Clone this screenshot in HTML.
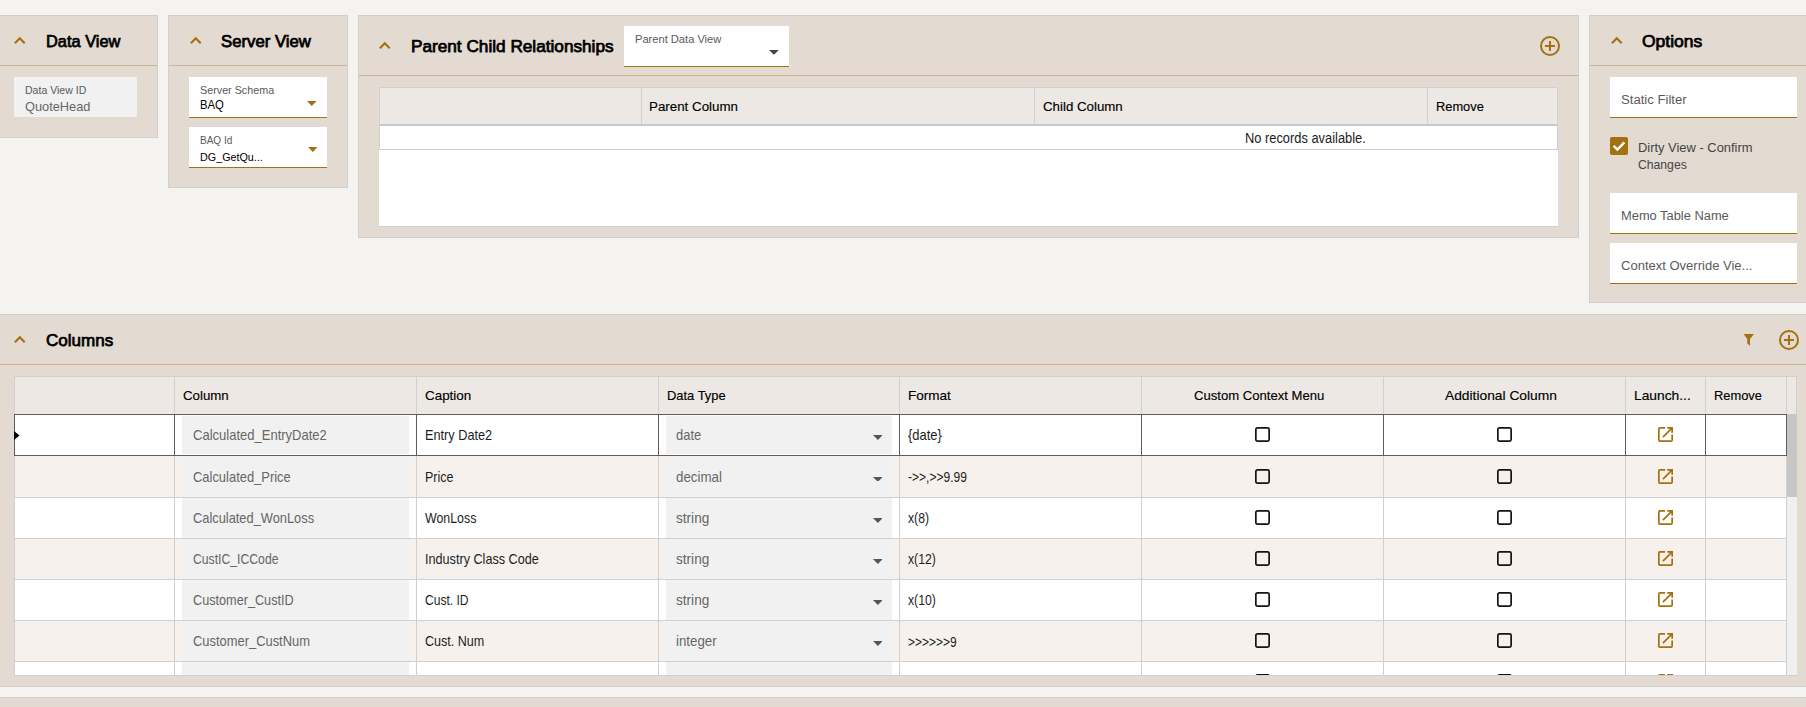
<!DOCTYPE html>
<html><head><meta charset="utf-8"><style>
html,body{margin:0;padding:0;}
body{width:1806px;height:707px;overflow:hidden;background:#f4f3ef;position:relative;font-family:"Liberation Sans",sans-serif;}
.a{position:absolute;}
.t{position:absolute;white-space:nowrap;transform-origin:0 0;}
svg{display:block;}
</style></head><body>
<div class="a" style="left:-1px;top:15px;width:159px;height:123px;background:#e3dad1;box-sizing:border-box;border:1px solid #cfcfcf;"></div>
<div class="a" style="left:0px;top:65px;width:157px;height:1px;background:#cfb397;"></div>
<svg class="a" style="left:11.8px;top:35.1px" width="16" height="12" viewBox="0 0 16 12"><polyline points="2.9,8.2 7.8,3.3 12.7,8.2" fill="none" stroke="#a5700f" stroke-width="2.2"/></svg>
<div class="t" style="left:46.20px;top:32.88px;font-size:17.15px;line-height:17.15px;font-weight:normal;color:#000;-webkit-text-stroke:0.75px #000;transform:scaleX(0.9555)">Data View</div>
<div class="a" style="left:14px;top:77px;width:123px;height:40px;background:#f1f1f1;"></div>
<div class="t" style="left:24.60px;top:85.07px;font-size:10.90px;line-height:10.90px;font-weight:normal;color:#5a5a5a;transform:scaleX(0.9666)">Data View ID</div>
<div class="t" style="left:24.60px;top:101.35px;font-size:12.94px;line-height:12.94px;font-weight:normal;color:#666;transform:scaleX(0.9884)">QuoteHead</div>
<div class="a" style="left:168px;top:15px;width:180px;height:173px;background:#e3dad1;box-sizing:border-box;border:1px solid #cfcfcf;"></div>
<div class="a" style="left:169px;top:65px;width:178px;height:1px;background:#cfb397;"></div>
<svg class="a" style="left:187.6px;top:35.4px" width="16" height="12" viewBox="0 0 16 12"><polyline points="2.9,8.2 7.8,3.3 12.7,8.2" fill="none" stroke="#a5700f" stroke-width="2.2"/></svg>
<div class="t" style="left:221.00px;top:33.75px;font-size:16.72px;line-height:16.72px;font-weight:normal;color:#000;-webkit-text-stroke:0.75px #000;transform:scaleX(1.0021)">Server View</div>
<div class="a" style="left:189px;top:77px;width:138px;height:41px;background:#fff;"></div>
<div class="a" style="left:189px;top:117px;width:138px;height:1px;background:#a5700f;"></div>
<div class="t" style="left:199.90px;top:84.93px;font-size:11.19px;line-height:11.19px;font-weight:normal;color:#5a5a5a;transform:scaleX(0.9620)">Server Schema</div>
<div class="t" style="left:199.90px;top:98.65px;font-size:12.94px;line-height:12.94px;font-weight:normal;color:#000;transform:scaleX(0.8748)">BAQ</div>
<svg class="a" style="left:307.4px;top:101px" width="9.6" height="5" viewBox="0 0 9.6 5"><polygon points="0,0 9.6,0 4.8,5" fill="#a5700f"/></svg>
<div class="a" style="left:189px;top:127px;width:138px;height:41px;background:#fff;"></div>
<div class="a" style="left:189px;top:167px;width:138px;height:1px;background:#a5700f;"></div>
<div class="t" style="left:199.80px;top:133.56px;font-size:11.63px;line-height:11.63px;font-weight:normal;color:#5a5a5a;transform:scaleX(0.8617)">BAQ Id</div>
<div class="t" style="left:199.80px;top:152.05px;font-size:11.05px;line-height:11.05px;font-weight:normal;color:#000;transform:scaleX(0.9742)">DG_GetQu...</div>
<svg class="a" style="left:307.5px;top:147px" width="9.6" height="5" viewBox="0 0 9.6 5"><polygon points="0,0 9.6,0 4.8,5" fill="#a5700f"/></svg>
<div class="a" style="left:358px;top:15px;width:1221px;height:223px;background:#e3dad1;box-sizing:border-box;border:1px solid #cfcfcf;"></div>
<div class="a" style="left:359px;top:75px;width:1219px;height:1px;background:#cfb397;"></div>
<svg class="a" style="left:377.2px;top:40.1px" width="16" height="12" viewBox="0 0 16 12"><polyline points="2.9,8.2 7.8,3.3 12.7,8.2" fill="none" stroke="#a5700f" stroke-width="2.2"/></svg>
<div class="t" style="left:411.00px;top:38.83px;font-size:16.86px;line-height:16.86px;font-weight:normal;color:#000;-webkit-text-stroke:0.75px #000;transform:scaleX(1.0197)">Parent Child Relationships</div>
<div class="a" style="left:624px;top:26px;width:165px;height:41px;background:#fff;"></div>
<div class="a" style="left:624px;top:66px;width:165px;height:1px;background:#a5700f;"></div>
<div class="t" style="left:634.80px;top:33.78px;font-size:11.48px;line-height:11.48px;font-weight:normal;color:#5a5a5a;transform:scaleX(0.9692)">Parent Data View</div>
<svg class="a" style="left:769.2px;top:50.2px" width="9.8" height="4.8" viewBox="0 0 9.8 4.8"><polygon points="0,0 9.8,0 4.9,4.8" fill="#444"/></svg>
<svg class="a" style="left:1538.9px;top:35.3px" width="22" height="22" viewBox="0 0 22 22"><circle cx="11" cy="11" r="9" fill="none" stroke="#a5700f" stroke-width="2"/><path d="M6 11h10M11 6v10" stroke="#a5700f" stroke-width="2"/></svg>
<div class="a" style="left:379px;top:87px;width:1179px;height:139px;background:#fff;"></div>
<div class="a" style="left:379px;top:226px;width:1179px;height:1px;background:#d0d0d0;"></div>
<div class="a" style="left:379px;top:87px;width:1px;height:63px;background:#d0d0d0;"></div>
<div class="a" style="left:1557px;top:87px;width:1px;height:63px;background:#d0d0d0;"></div>
<div class="a" style="left:379px;top:87px;width:1179px;height:1px;background:#d0d0d0;"></div>
<div class="a" style="left:380px;top:88px;width:1177px;height:36px;background:#ede8e3;"></div>
<div class="a" style="left:380px;top:124px;width:1177px;height:2px;background:#c8c8c8;"></div>
<div class="a" style="left:641px;top:88px;width:1px;height:36px;background:#d0d0d0;"></div>
<div class="a" style="left:1034px;top:88px;width:1px;height:36px;background:#d0d0d0;"></div>
<div class="a" style="left:1427px;top:88px;width:1px;height:36px;background:#d0d0d0;"></div>
<div class="a" style="left:380px;top:149px;width:1177px;height:1px;background:#d0d0d0;"></div>
<div class="t" style="left:649.00px;top:100.03px;font-size:13.66px;line-height:13.66px;font-weight:normal;color:#000;-webkit-text-stroke:0.15px #000;transform:scaleX(0.9766)">Parent Column</div>
<div class="t" style="left:1042.50px;top:100.03px;font-size:13.66px;line-height:13.66px;font-weight:normal;color:#000;-webkit-text-stroke:0.15px #000;transform:scaleX(0.9730)">Child Column</div>
<div class="t" style="left:1435.80px;top:100.03px;font-size:13.66px;line-height:13.66px;font-weight:normal;color:#000;-webkit-text-stroke:0.15px #000;transform:scaleX(0.9395)">Remove</div>
<div class="t" style="left:1245.30px;top:131.99px;font-size:13.95px;line-height:13.95px;font-weight:normal;color:#222;transform:scaleX(0.9224)">No records available.</div>
<div class="a" style="left:1589px;top:15px;width:220px;height:288px;background:#e3dad1;box-sizing:border-box;border:1px solid #cfcfcf;"></div>
<div class="a" style="left:1590px;top:65px;width:218px;height:1px;background:#cfb397;"></div>
<svg class="a" style="left:1608.5px;top:35.3px" width="16" height="12" viewBox="0 0 16 12"><polyline points="2.9,8.2 7.8,3.3 12.7,8.2" fill="none" stroke="#a5700f" stroke-width="2.2"/></svg>
<div class="t" style="left:1642.00px;top:33.10px;font-size:17.01px;line-height:17.01px;font-weight:normal;color:#000;-webkit-text-stroke:0.75px #000;transform:scaleX(1.0289)">Options</div>
<div class="a" style="left:1610px;top:77px;width:187px;height:41px;background:#fff;"></div>
<div class="a" style="left:1610px;top:117px;width:187px;height:1px;background:#a5700f;"></div>
<div class="t" style="left:1620.60px;top:93.03px;font-size:13.66px;line-height:13.66px;font-weight:normal;color:#5a5a5a;transform:scaleX(0.9615)">Static Filter</div>
<div class="a" style="left:1610px;top:137px;width:18px;height:18px;background:#a5700f;border-radius:2px;"></div>
<svg class="a" style="left:1610px;top:137px" width="18" height="18" viewBox="0 0 18 18"><polyline points="3.6,8.8 7.4,12.5 14.4,5.3" fill="none" stroke="#fff" stroke-width="2.4"/></svg>
<div class="t" style="left:1638.20px;top:141.18px;font-size:13.37px;line-height:13.37px;font-weight:normal;color:#444;transform:scaleX(0.9660)">Dirty View - Confirm</div>
<div class="t" style="left:1638.20px;top:159.44px;font-size:12.35px;line-height:12.35px;font-weight:normal;color:#444;transform:scaleX(0.9867)">Changes</div>
<div class="a" style="left:1610px;top:193px;width:187px;height:41px;background:#fff;"></div>
<div class="a" style="left:1610px;top:233px;width:187px;height:1px;background:#a5700f;"></div>
<div class="t" style="left:1621.00px;top:209.16px;font-size:13.52px;line-height:13.52px;font-weight:normal;color:#5a5a5a;transform:scaleX(0.9523)">Memo Table Name</div>
<div class="a" style="left:1610px;top:243px;width:187px;height:41px;background:#fff;"></div>
<div class="a" style="left:1610px;top:283px;width:187px;height:1px;background:#a5700f;"></div>
<div class="t" style="left:1621.00px;top:259.33px;font-size:13.66px;line-height:13.66px;font-weight:normal;color:#5a5a5a;transform:scaleX(0.9532)">Context Override Vie...</div>
<div class="a" style="left:-1px;top:314px;width:1808px;height:373px;background:#e3dad1;box-sizing:border-box;border:1px solid #cfcfcf;"></div>
<div class="a" style="left:0px;top:364px;width:1806px;height:1px;background:#cfb397;"></div>
<svg class="a" style="left:11.9px;top:334.4px" width="16" height="12" viewBox="0 0 16 12"><polyline points="2.9,8.2 7.8,3.3 12.7,8.2" fill="none" stroke="#a5700f" stroke-width="2.2"/></svg>
<div class="t" style="left:45.70px;top:331.76px;font-size:17.30px;line-height:17.30px;font-weight:normal;color:#000;-webkit-text-stroke:0.75px #000;transform:scaleX(0.9861)">Columns</div>
<svg class="a" style="left:1743px;top:333px" width="12" height="13" viewBox="0 0 12 13"><polygon points="0.5,1 11,1 7,6 7,12.8 4.3,10.5 4.3,6" fill="#a5700f"/></svg>
<svg class="a" style="left:1777.8px;top:328.9px" width="22" height="22" viewBox="0 0 22 22"><circle cx="11" cy="11" r="9" fill="none" stroke="#a5700f" stroke-width="2"/><path d="M6 11h10M11 6v10" stroke="#a5700f" stroke-width="2"/></svg>
<div class="a" style="left:14px;top:376px;width:1783px;height:300px;background:#fff;box-sizing:border-box;border:1px solid #d0d0d0;"></div>
<div class="a" style="left:15px;top:377px;width:1781px;height:37px;background:#ede8e3;"></div>
<div class="a" style="left:174px;top:377px;width:1px;height:37px;background:#d0d0d0;"></div>
<div class="a" style="left:416px;top:377px;width:1px;height:37px;background:#d0d0d0;"></div>
<div class="a" style="left:658px;top:377px;width:1px;height:37px;background:#d0d0d0;"></div>
<div class="a" style="left:899px;top:377px;width:1px;height:37px;background:#d0d0d0;"></div>
<div class="a" style="left:1141px;top:377px;width:1px;height:37px;background:#d0d0d0;"></div>
<div class="a" style="left:1383px;top:377px;width:1px;height:37px;background:#d0d0d0;"></div>
<div class="a" style="left:1625px;top:377px;width:1px;height:37px;background:#d0d0d0;"></div>
<div class="a" style="left:1705px;top:377px;width:1px;height:37px;background:#d0d0d0;"></div>
<div class="a" style="left:1786px;top:377px;width:1px;height:37px;background:#d0d0d0;"></div>
<div class="a" style="left:15px;top:415px;width:1772px;height:40px;background:#fff;"></div>
<div class="a" style="left:15px;top:456px;width:1772px;height:41px;background:#f6f1ed;"></div>
<div class="a" style="left:15px;top:498px;width:1772px;height:40px;background:#fff;"></div>
<div class="a" style="left:15px;top:539px;width:1772px;height:40px;background:#f6f1ed;"></div>
<div class="a" style="left:15px;top:580px;width:1772px;height:40px;background:#fff;"></div>
<div class="a" style="left:15px;top:621px;width:1772px;height:40px;background:#f6f1ed;"></div>
<div class="a" style="left:15px;top:662px;width:1772px;height:13px;background:#fff;"></div>
<div class="a" style="left:182px;top:416px;width:227px;height:38px;background:#f1f1f1;"></div>
<div class="a" style="left:666px;top:416px;width:226px;height:38px;background:#f1f1f1;"></div>
<div class="a" style="left:182px;top:456px;width:227px;height:41px;background:#f1f1f1;"></div>
<div class="a" style="left:666px;top:456px;width:226px;height:41px;background:#f1f1f1;"></div>
<div class="a" style="left:182px;top:498px;width:227px;height:40px;background:#f1f1f1;"></div>
<div class="a" style="left:666px;top:498px;width:226px;height:40px;background:#f1f1f1;"></div>
<div class="a" style="left:182px;top:539px;width:227px;height:40px;background:#f1f1f1;"></div>
<div class="a" style="left:666px;top:539px;width:226px;height:40px;background:#f1f1f1;"></div>
<div class="a" style="left:182px;top:580px;width:227px;height:40px;background:#f1f1f1;"></div>
<div class="a" style="left:666px;top:580px;width:226px;height:40px;background:#f1f1f1;"></div>
<div class="a" style="left:182px;top:621px;width:227px;height:40px;background:#f1f1f1;"></div>
<div class="a" style="left:666px;top:621px;width:226px;height:40px;background:#f1f1f1;"></div>
<div class="a" style="left:182px;top:662px;width:227px;height:13px;background:#f1f1f1;"></div>
<div class="a" style="left:666px;top:662px;width:226px;height:13px;background:#f1f1f1;"></div>
<div class="a" style="left:15px;top:497px;width:1771px;height:1px;background:#d0d0d0;"></div>
<div class="a" style="left:15px;top:538px;width:1771px;height:1px;background:#d0d0d0;"></div>
<div class="a" style="left:15px;top:579px;width:1771px;height:1px;background:#d0d0d0;"></div>
<div class="a" style="left:15px;top:620px;width:1771px;height:1px;background:#d0d0d0;"></div>
<div class="a" style="left:15px;top:661px;width:1771px;height:1px;background:#d0d0d0;"></div>
<div class="a" style="left:174px;top:456px;width:1px;height:219px;background:#d0d0d0;"></div>
<div class="a" style="left:416px;top:456px;width:1px;height:219px;background:#d0d0d0;"></div>
<div class="a" style="left:658px;top:456px;width:1px;height:219px;background:#d0d0d0;"></div>
<div class="a" style="left:899px;top:456px;width:1px;height:219px;background:#d0d0d0;"></div>
<div class="a" style="left:1141px;top:456px;width:1px;height:219px;background:#d0d0d0;"></div>
<div class="a" style="left:1383px;top:456px;width:1px;height:219px;background:#d0d0d0;"></div>
<div class="a" style="left:1625px;top:456px;width:1px;height:219px;background:#d0d0d0;"></div>
<div class="a" style="left:1705px;top:456px;width:1px;height:219px;background:#d0d0d0;"></div>
<div class="a" style="left:14px;top:414px;width:1773px;height:1px;background:#5e5e5e;"></div>
<div class="a" style="left:14px;top:455px;width:1773px;height:1px;background:#5e5e5e;"></div>
<div class="a" style="left:14px;top:414px;width:1px;height:42px;background:#5e5e5e;"></div>
<div class="a" style="left:1786px;top:414px;width:1px;height:42px;background:#5e5e5e;"></div>
<div class="a" style="left:174px;top:414px;width:1px;height:42px;background:#5e5e5e;"></div>
<div class="a" style="left:416px;top:414px;width:1px;height:42px;background:#5e5e5e;"></div>
<div class="a" style="left:658px;top:414px;width:1px;height:42px;background:#5e5e5e;"></div>
<div class="a" style="left:899px;top:414px;width:1px;height:42px;background:#5e5e5e;"></div>
<div class="a" style="left:1141px;top:414px;width:1px;height:42px;background:#5e5e5e;"></div>
<div class="a" style="left:1383px;top:414px;width:1px;height:42px;background:#5e5e5e;"></div>
<div class="a" style="left:1625px;top:414px;width:1px;height:42px;background:#5e5e5e;"></div>
<div class="a" style="left:1705px;top:414px;width:1px;height:42px;background:#5e5e5e;"></div>
<svg class="a" style="left:14px;top:431px" width="6" height="9" viewBox="0 0 6 9"><polygon points="0,0 5.5,4.5 0,9" fill="#000"/></svg>
<div class="a" style="left:1787px;top:414px;width:10px;height:261px;background:#f0f0f0;"></div>
<div class="a" style="left:1787px;top:414px;width:10px;height:83px;background:#c6c6c6;"></div>
<div class="a" style="left:1786px;top:456px;width:1px;height:219px;background:#d0d0d0;"></div>
<div class="t" style="left:182.70px;top:388.88px;font-size:13.37px;line-height:13.37px;font-weight:normal;color:#000;-webkit-text-stroke:0.15px #000;transform:scaleX(0.9939)">Column</div>
<div class="t" style="left:424.50px;top:388.88px;font-size:13.37px;line-height:13.37px;font-weight:normal;color:#000;-webkit-text-stroke:0.15px #000;transform:scaleX(1.0045)">Caption</div>
<div class="t" style="left:666.50px;top:388.88px;font-size:13.37px;line-height:13.37px;font-weight:normal;color:#000;-webkit-text-stroke:0.15px #000;transform:scaleX(0.9669)">Data Type</div>
<div class="t" style="left:908.10px;top:388.88px;font-size:13.37px;line-height:13.37px;font-weight:normal;color:#000;-webkit-text-stroke:0.15px #000;transform:scaleX(1.0130)">Format</div>
<div class="t" style="left:1194.00px;top:388.88px;font-size:13.37px;line-height:13.37px;font-weight:normal;color:#000;-webkit-text-stroke:0.15px #000;transform:scaleX(0.9802)">Custom Context Menu</div>
<div class="t" style="left:1444.80px;top:388.88px;font-size:13.37px;line-height:13.37px;font-weight:normal;color:#000;-webkit-text-stroke:0.15px #000;transform:scaleX(1.0320)">Additional Column</div>
<div class="t" style="left:1633.60px;top:388.88px;font-size:13.37px;line-height:13.37px;font-weight:normal;color:#000;-webkit-text-stroke:0.15px #000;transform:scaleX(1.0324)">Launch...</div>
<div class="t" style="left:1714.00px;top:388.88px;font-size:13.37px;line-height:13.37px;font-weight:normal;color:#000;-webkit-text-stroke:0.15px #000;transform:scaleX(0.9620)">Remove</div>
<div class="t" style="left:192.60px;top:428.17px;font-size:14.10px;line-height:14.10px;font-weight:normal;color:#666;transform:scaleX(0.9235)">Calculated_EntryDate2</div>
<div class="t" style="left:424.50px;top:428.17px;font-size:14.10px;line-height:14.10px;font-weight:normal;color:#1e1e1e;transform:scaleX(0.9027)">Entry Date2</div>
<div class="t" style="left:676.20px;top:428.17px;font-size:14.10px;line-height:14.10px;font-weight:normal;color:#666;transform:scaleX(0.9183)">date</div>
<div class="t" style="left:907.80px;top:428.17px;font-size:14.10px;line-height:14.10px;font-weight:normal;color:#1e1e1e;transform:scaleX(0.9197)">{date}</div>
<svg class="a" style="left:872.5px;top:434.8px" width="9.8" height="4.9" viewBox="0 0 9.8 4.9"><polygon points="0,0 9.8,0 4.9,4.9" fill="#555"/></svg>
<svg class="a" style="left:1255px;top:427px" width="15" height="15" viewBox="0 0 15 15"><rect x="0.85" y="0.85" width="13.3" height="13.3" rx="1.6" fill="none" stroke="#141414" stroke-width="1.7"/></svg>
<svg class="a" style="left:1497px;top:427px" width="15" height="15" viewBox="0 0 15 15"><rect x="0.85" y="0.85" width="13.3" height="13.3" rx="1.6" fill="none" stroke="#141414" stroke-width="1.7"/></svg>
<svg class="a" style="left:1658px;top:427px" width="16" height="16" viewBox="0 0 16 16"><path d="M7.1 0.85H1.9Q0.85 0.85 0.85 1.9V13.1Q0.85 14.15 1.9 14.15H13.1Q14.15 14.15 14.15 13.1V7.6" fill="none" stroke="#a5700f" stroke-width="1.7"/><path d="M9.2 0.85H14.15V5.8M14.15 0.85L4.9 10.1" fill="none" stroke="#a5700f" stroke-width="1.7"/></svg>
<div class="t" style="left:192.60px;top:469.67px;font-size:14.10px;line-height:14.10px;font-weight:normal;color:#666;transform:scaleX(0.9176)">Calculated_Price</div>
<div class="t" style="left:424.50px;top:469.67px;font-size:14.10px;line-height:14.10px;font-weight:normal;color:#1e1e1e;transform:scaleX(0.8872)">Price</div>
<div class="t" style="left:676.20px;top:469.67px;font-size:14.10px;line-height:14.10px;font-weight:normal;color:#666;transform:scaleX(0.9448)">decimal</div>
<div class="t" style="left:907.80px;top:469.67px;font-size:14.10px;line-height:14.10px;font-weight:normal;color:#1e1e1e;transform:scaleX(0.8552)">-&gt;&gt;,&gt;&gt;9.99</div>
<svg class="a" style="left:872.5px;top:476.5px" width="9.8" height="4.9" viewBox="0 0 9.8 4.9"><polygon points="0,0 9.8,0 4.9,4.9" fill="#555"/></svg>
<svg class="a" style="left:1255px;top:469px" width="15" height="15" viewBox="0 0 15 15"><rect x="0.85" y="0.85" width="13.3" height="13.3" rx="1.6" fill="none" stroke="#141414" stroke-width="1.7"/></svg>
<svg class="a" style="left:1497px;top:469px" width="15" height="15" viewBox="0 0 15 15"><rect x="0.85" y="0.85" width="13.3" height="13.3" rx="1.6" fill="none" stroke="#141414" stroke-width="1.7"/></svg>
<svg class="a" style="left:1658px;top:469px" width="16" height="16" viewBox="0 0 16 16"><path d="M7.1 0.85H1.9Q0.85 0.85 0.85 1.9V13.1Q0.85 14.15 1.9 14.15H13.1Q14.15 14.15 14.15 13.1V7.6" fill="none" stroke="#a5700f" stroke-width="1.7"/><path d="M9.2 0.85H14.15V5.8M14.15 0.85L4.9 10.1" fill="none" stroke="#a5700f" stroke-width="1.7"/></svg>
<div class="t" style="left:192.60px;top:510.77px;font-size:14.10px;line-height:14.10px;font-weight:normal;color:#666;transform:scaleX(0.9107)">Calculated_WonLoss</div>
<div class="t" style="left:424.50px;top:510.77px;font-size:14.10px;line-height:14.10px;font-weight:normal;color:#1e1e1e;transform:scaleX(0.8784)">WonLoss</div>
<div class="t" style="left:676.20px;top:510.77px;font-size:14.10px;line-height:14.10px;font-weight:normal;color:#666;transform:scaleX(0.9659)">string</div>
<div class="t" style="left:907.80px;top:510.77px;font-size:14.10px;line-height:14.10px;font-weight:normal;color:#1e1e1e;transform:scaleX(0.8690)">x(8)</div>
<svg class="a" style="left:872.5px;top:517.7px" width="9.8" height="4.9" viewBox="0 0 9.8 4.9"><polygon points="0,0 9.8,0 4.9,4.9" fill="#555"/></svg>
<svg class="a" style="left:1255px;top:510px" width="15" height="15" viewBox="0 0 15 15"><rect x="0.85" y="0.85" width="13.3" height="13.3" rx="1.6" fill="none" stroke="#141414" stroke-width="1.7"/></svg>
<svg class="a" style="left:1497px;top:510px" width="15" height="15" viewBox="0 0 15 15"><rect x="0.85" y="0.85" width="13.3" height="13.3" rx="1.6" fill="none" stroke="#141414" stroke-width="1.7"/></svg>
<svg class="a" style="left:1658px;top:510px" width="16" height="16" viewBox="0 0 16 16"><path d="M7.1 0.85H1.9Q0.85 0.85 0.85 1.9V13.1Q0.85 14.15 1.9 14.15H13.1Q14.15 14.15 14.15 13.1V7.6" fill="none" stroke="#a5700f" stroke-width="1.7"/><path d="M9.2 0.85H14.15V5.8M14.15 0.85L4.9 10.1" fill="none" stroke="#a5700f" stroke-width="1.7"/></svg>
<div class="t" style="left:192.60px;top:552.17px;font-size:14.10px;line-height:14.10px;font-weight:normal;color:#666;transform:scaleX(0.8660)">CustIC_ICCode</div>
<div class="t" style="left:424.50px;top:552.17px;font-size:14.10px;line-height:14.10px;font-weight:normal;color:#1e1e1e;transform:scaleX(0.8972)">Industry Class Code</div>
<div class="t" style="left:676.20px;top:552.17px;font-size:14.10px;line-height:14.10px;font-weight:normal;color:#666;transform:scaleX(0.9659)">string</div>
<div class="t" style="left:907.80px;top:552.17px;font-size:14.10px;line-height:14.10px;font-weight:normal;color:#1e1e1e;transform:scaleX(0.8685)">x(12)</div>
<svg class="a" style="left:872.5px;top:558.8px" width="9.8" height="4.9" viewBox="0 0 9.8 4.9"><polygon points="0,0 9.8,0 4.9,4.9" fill="#555"/></svg>
<svg class="a" style="left:1255px;top:551px" width="15" height="15" viewBox="0 0 15 15"><rect x="0.85" y="0.85" width="13.3" height="13.3" rx="1.6" fill="none" stroke="#141414" stroke-width="1.7"/></svg>
<svg class="a" style="left:1497px;top:551px" width="15" height="15" viewBox="0 0 15 15"><rect x="0.85" y="0.85" width="13.3" height="13.3" rx="1.6" fill="none" stroke="#141414" stroke-width="1.7"/></svg>
<svg class="a" style="left:1658px;top:551px" width="16" height="16" viewBox="0 0 16 16"><path d="M7.1 0.85H1.9Q0.85 0.85 0.85 1.9V13.1Q0.85 14.15 1.9 14.15H13.1Q14.15 14.15 14.15 13.1V7.6" fill="none" stroke="#a5700f" stroke-width="1.7"/><path d="M9.2 0.85H14.15V5.8M14.15 0.85L4.9 10.1" fill="none" stroke="#a5700f" stroke-width="1.7"/></svg>
<div class="t" style="left:192.60px;top:592.97px;font-size:14.10px;line-height:14.10px;font-weight:normal;color:#666;transform:scaleX(0.8988)">Customer_CustID</div>
<div class="t" style="left:424.50px;top:592.97px;font-size:14.10px;line-height:14.10px;font-weight:normal;color:#1e1e1e;transform:scaleX(0.8542)">Cust. ID</div>
<div class="t" style="left:676.20px;top:592.97px;font-size:14.10px;line-height:14.10px;font-weight:normal;color:#666;transform:scaleX(0.9659)">string</div>
<div class="t" style="left:907.80px;top:592.97px;font-size:14.10px;line-height:14.10px;font-weight:normal;color:#1e1e1e;transform:scaleX(0.8685)">x(10)</div>
<svg class="a" style="left:872.5px;top:599.8px" width="9.8" height="4.9" viewBox="0 0 9.8 4.9"><polygon points="0,0 9.8,0 4.9,4.9" fill="#555"/></svg>
<svg class="a" style="left:1255px;top:592px" width="15" height="15" viewBox="0 0 15 15"><rect x="0.85" y="0.85" width="13.3" height="13.3" rx="1.6" fill="none" stroke="#141414" stroke-width="1.7"/></svg>
<svg class="a" style="left:1497px;top:592px" width="15" height="15" viewBox="0 0 15 15"><rect x="0.85" y="0.85" width="13.3" height="13.3" rx="1.6" fill="none" stroke="#141414" stroke-width="1.7"/></svg>
<svg class="a" style="left:1658px;top:592px" width="16" height="16" viewBox="0 0 16 16"><path d="M7.1 0.85H1.9Q0.85 0.85 0.85 1.9V13.1Q0.85 14.15 1.9 14.15H13.1Q14.15 14.15 14.15 13.1V7.6" fill="none" stroke="#a5700f" stroke-width="1.7"/><path d="M9.2 0.85H14.15V5.8M14.15 0.85L4.9 10.1" fill="none" stroke="#a5700f" stroke-width="1.7"/></svg>
<div class="t" style="left:192.60px;top:633.67px;font-size:14.10px;line-height:14.10px;font-weight:normal;color:#666;transform:scaleX(0.9161)">Customer_CustNum</div>
<div class="t" style="left:424.50px;top:633.67px;font-size:14.10px;line-height:14.10px;font-weight:normal;color:#1e1e1e;transform:scaleX(0.8905)">Cust. Num</div>
<div class="t" style="left:676.20px;top:633.67px;font-size:14.10px;line-height:14.10px;font-weight:normal;color:#666;transform:scaleX(0.9441)">integer</div>
<div class="t" style="left:907.80px;top:634.67px;font-size:14.10px;line-height:14.10px;font-weight:normal;color:#1e1e1e;transform:scaleX(0.8508)">&gt;&gt;&gt;&gt;&gt;&gt;9</div>
<svg class="a" style="left:872.5px;top:640.8px" width="9.8" height="4.9" viewBox="0 0 9.8 4.9"><polygon points="0,0 9.8,0 4.9,4.9" fill="#555"/></svg>
<svg class="a" style="left:1255px;top:633px" width="15" height="15" viewBox="0 0 15 15"><rect x="0.85" y="0.85" width="13.3" height="13.3" rx="1.6" fill="none" stroke="#141414" stroke-width="1.7"/></svg>
<svg class="a" style="left:1497px;top:633px" width="15" height="15" viewBox="0 0 15 15"><rect x="0.85" y="0.85" width="13.3" height="13.3" rx="1.6" fill="none" stroke="#141414" stroke-width="1.7"/></svg>
<svg class="a" style="left:1658px;top:633px" width="16" height="16" viewBox="0 0 16 16"><path d="M7.1 0.85H1.9Q0.85 0.85 0.85 1.9V13.1Q0.85 14.15 1.9 14.15H13.1Q14.15 14.15 14.15 13.1V7.6" fill="none" stroke="#a5700f" stroke-width="1.7"/><path d="M9.2 0.85H14.15V5.8M14.15 0.85L4.9 10.1" fill="none" stroke="#a5700f" stroke-width="1.7"/></svg>
<div class="a" style="left:0;top:662px;width:1806px;height:13px;overflow:hidden">
<svg class="a" style="left:1255px;top:12px" width="15" height="15" viewBox="0 0 15 15"><rect x="0.85" y="0.85" width="13.3" height="13.3" rx="1.6" fill="none" stroke="#141414" stroke-width="1.7"/></svg>
<svg class="a" style="left:1497px;top:12px" width="15" height="15" viewBox="0 0 15 15"><rect x="0.85" y="0.85" width="13.3" height="13.3" rx="1.6" fill="none" stroke="#141414" stroke-width="1.7"/></svg>
<svg class="a" style="left:1658px;top:12px" width="16" height="16" viewBox="0 0 16 16"><path d="M7.1 0.85H1.9Q0.85 0.85 0.85 1.9V13.1Q0.85 14.15 1.9 14.15H13.1Q14.15 14.15 14.15 13.1V7.6" fill="none" stroke="#a5700f" stroke-width="1.7"/><path d="M9.2 0.85H14.15V5.8M14.15 0.85L4.9 10.1" fill="none" stroke="#a5700f" stroke-width="1.7"/></svg>
</div>
<div class="a" style="left:-1px;top:697px;width:1808px;height:30px;background:#e3dad1;box-sizing:border-box;border:1px solid #cfcfcf;"></div>
</body></html>
